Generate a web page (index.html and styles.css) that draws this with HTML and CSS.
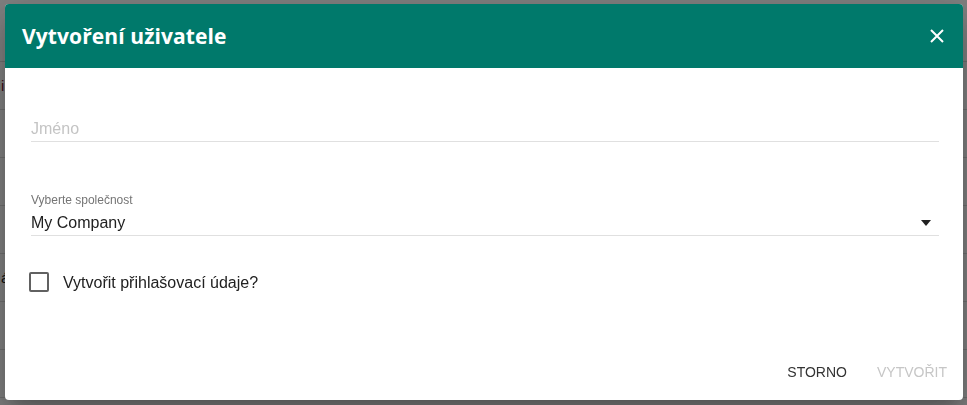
FILE: index.html
```html
<!DOCTYPE html>
<html lang="cs">

<head>
    <meta charset="UTF-8">
    <title>Vytvoření uživatele</title>
    <link rel="stylesheet" href="styles.css">
</head>

<body>

    <!-- page behind the modal -->
    <div class="page">
        <div class="row"></div>
        <div class="row"><span class="cell link">i</span></div>
        <div class="row"></div>
        <div class="row"></div>
        <div class="row"></div>
        <div class="row"><span class="cell">á</span></div>
        <div class="row"></div>
        <div class="row"></div>
    </div>

    <div class="backdrop"></div>

    <div class="dialog" role="dialog">
        <div class="dialog-header">
            <h2 class="dialog-title">Vytvoření uživatele</h2>
            <button class="close-btn" aria-label="Zavřít">
                <svg width="14" height="14" viewBox="0 0 14 14">
                    <path d="M1 1L13 13M13 1L1 13" stroke="#fff" stroke-width="2" fill="none" />
                </svg>
            </button>
        </div>

        <div class="dialog-body">
            <div class="field name-field">
                <input class="text-input" type="text" placeholder="Jméno">
            </div>

            <label class="field-label">Vyberte společnost</label>
            <div class="field select-field">
                <span class="select-value">My Company</span>
                <span class="select-arrow"></span>
            </div>

            <label class="check-row">
                <span class="check-box"></span>
                <span class="check-label">Vytvořit přihlašovací údaje?</span>
            </label>
        </div>

        <div class="dialog-actions">
            <button class="btn">Storno</button>
            <button class="btn" disabled>Vytvořit</button>
        </div>
    </div>

</body>

</html>
```

FILE: styles.css
```css
* {
    box-sizing: border-box;
}

html,
body {
    margin: 0;
    padding: 0;
    height: 100%;
    overflow: hidden;
    font-family: "Liberation Sans", Arial, sans-serif;
    background: #fff;
}

.page {
    padding-top: 14px;
}

.row {
    height: 48px;
    border-bottom: 1px solid #dcdcdc;
    display: flex;
    align-items: center;
}

.cell {
    font-size: 15px;
    color: #222;
    margin-left: 1px;
}

.cell.link {
    color: #7a1530;
}

.backdrop {
    position: fixed;
    inset: 0;
    background: rgba(0, 0, 0, 0.5);
}

.dialog {
    position: fixed;
    left: 5px;
    top: 4px;
    width: 958px;
    height: 396px;
    background: #fff;
    border-radius: 4px;
    overflow: hidden;
    display: flex;
    flex-direction: column;
    box-shadow: 0 11px 15px -7px rgba(0, 0, 0, 0.2), 0 24px 38px 3px rgba(0, 0, 0, 0.14), 0 9px 46px 8px rgba(0, 0, 0, 0.12);
}

.dialog-header {
    height: 64px;
    background: #00796b;
    display: flex;
    align-items: center;
    justify-content: space-between;
    padding: 0 19px 0 17px;
}

.dialog-title {
    margin: 0;
    font-family: "Open Sans", sans-serif;
    font-weight: 700;
    font-size: 21px;
    color: #fff;
    letter-spacing: 0.1px;
}

.close-btn {
    border: none;
    background: none;
    padding: 0;
    width: 14px;
    height: 14px;
    display: flex;
    cursor: pointer;
}

.dialog-body {
    flex: 1;
    padding: 51px 24px 0 26px;
    display: flex;
    flex-direction: column;
}

.field {
    border-bottom: 1px solid #e0e0e0;
}

.name-field {
    padding-bottom: 3px;
}

.text-input {
    display: block;
    width: 100%;
    height: 19px;
    line-height: 19px;
    padding: 0;
    border: none;
    outline: none;
    font-family: inherit;
    font-size: 16px;
    color: #212121;
}

.text-input::placeholder {
    color: #c4c4c4;
}

.field-label {
    margin-top: 51px;
    font-size: 12px;
    line-height: 14px;
    color: #757575;
}

.select-field {
    margin-top: 6px;
    padding-bottom: 3px;
    display: flex;
    align-items: center;
    justify-content: space-between;
}

.select-value {
    font-size: 16px;
    line-height: 19px;
    color: #212121;
}

.select-arrow {
    width: 0;
    height: 0;
    margin-right: 8px;
    border-left: 5.5px solid transparent;
    border-right: 5.5px solid transparent;
    border-top: 6px solid #212121;
}

.check-row {
    margin-top: 36px;
    margin-left: -2px;
    display: flex;
    align-items: center;
    gap: 14px;
    cursor: pointer;
}

.check-box {
    width: 20px;
    height: 20px;
    border: 2px solid #616161;
    border-radius: 2px;
}

.check-label {
    font-size: 16px;
    line-height: 19px;
    color: #212121;
}

.dialog-actions {
    display: flex;
    justify-content: flex-end;
    gap: 14px;
    padding: 0 8px 14px 0;
}

.btn {
    border: none;
    background: none;
    padding: 6px 8px;
    font-family: inherit;
    font-size: 14px;
    line-height: 16px;
    text-transform: uppercase;
    color: #333;
    cursor: pointer;
}

.btn:disabled {
    color: #c6c6c6;
    cursor: default;
}
```
